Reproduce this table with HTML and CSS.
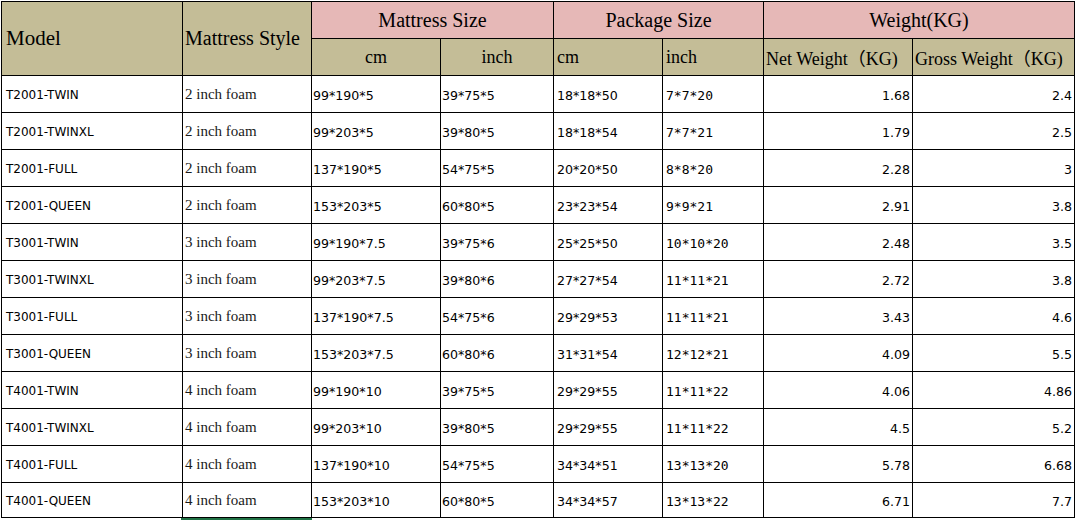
FILE: index.html
```html
<!DOCTYPE html>
<html>
<head>
<meta charset="utf-8">
<link rel="stylesheet" href="styles.css">
</head>
<body>
<div class="sheet">
  <div class="h tan big model">Model</div>
  <div class="h tan big mstyle">Mattress Style</div>
  <div class="h pink big center msize">Mattress Size</div>
  <div class="h pink big center psize">Package Size</div>
  <div class="h pink big center wsize">Weight(KG)</div>
  <div class="h tan sub center">cm</div>
  <div class="h tan sub center">inch</div>
  <div class="h tan sub left">cm</div>
  <div class="h tan sub left">inch</div>
  <div class="h tan sub2">Net Weight（KG)</div>
  <div class="h tan sub2">Gross Weight（KG)</div>

  <div class="c model-c">T2001-TWIN</div><div class="c style-c">2 inch foam</div><div class="c num">99*190*5</div><div class="c num">39*75*5</div><div class="c num pk">18*18*50</div><div class="c pki">7*7*20</div><div class="c w">1.68</div><div class="c w">2.4</div>
  <div class="c model-c">T2001-TWINXL</div><div class="c style-c">2 inch foam</div><div class="c num">99*203*5</div><div class="c num">39*80*5</div><div class="c num pk">18*18*54</div><div class="c pki">7*7*21</div><div class="c w">1.79</div><div class="c w">2.5</div>
  <div class="c model-c">T2001-FULL</div><div class="c style-c">2 inch foam</div><div class="c num">137*190*5</div><div class="c num">54*75*5</div><div class="c num pk">20*20*50</div><div class="c pki">8*8*20</div><div class="c w">2.28</div><div class="c w">3</div>
  <div class="c model-c">T2001-QUEEN</div><div class="c style-c">2 inch foam</div><div class="c num">153*203*5</div><div class="c num">60*80*5</div><div class="c num pk">23*23*54</div><div class="c pki">9*9*21</div><div class="c w">2.91</div><div class="c w">3.8</div>
  <div class="c model-c">T3001-TWIN</div><div class="c style-c">3 inch foam</div><div class="c num">99*190*7.5</div><div class="c num">39*75*6</div><div class="c num pk">25*25*50</div><div class="c pki">10*10*20</div><div class="c w">2.48</div><div class="c w">3.5</div>
  <div class="c model-c">T3001-TWINXL</div><div class="c style-c">3 inch foam</div><div class="c num">99*203*7.5</div><div class="c num">39*80*6</div><div class="c num pk">27*27*54</div><div class="c pki">11*11*21</div><div class="c w">2.72</div><div class="c w">3.8</div>
  <div class="c model-c">T3001-FULL</div><div class="c style-c">3 inch foam</div><div class="c num">137*190*7.5</div><div class="c num">54*75*6</div><div class="c num pk">29*29*53</div><div class="c pki">11*11*21</div><div class="c w">3.43</div><div class="c w">4.6</div>
  <div class="c model-c">T3001-QUEEN</div><div class="c style-c">3 inch foam</div><div class="c num">153*203*7.5</div><div class="c num">60*80*6</div><div class="c num pk">31*31*54</div><div class="c pki">12*12*21</div><div class="c w">4.09</div><div class="c w">5.5</div>
  <div class="c model-c">T4001-TWIN</div><div class="c style-c">4 inch foam</div><div class="c num">99*190*10</div><div class="c num">39*75*5</div><div class="c num pk">29*29*55</div><div class="c pki">11*11*22</div><div class="c w">4.06</div><div class="c w">4.86</div>
  <div class="c model-c">T4001-TWINXL</div><div class="c style-c">4 inch foam</div><div class="c num">99*203*10</div><div class="c num">39*80*5</div><div class="c num pk">29*29*55</div><div class="c pki">11*11*22</div><div class="c w">4.5</div><div class="c w">5.2</div>
  <div class="c model-c">T4001-FULL</div><div class="c style-c">4 inch foam</div><div class="c num">137*190*10</div><div class="c num">54*75*5</div><div class="c num pk">34*34*51</div><div class="c pki">13*13*20</div><div class="c w">5.78</div><div class="c w">6.68</div>
  <div class="c model-c">T4001-QUEEN</div><div class="c style-c">4 inch foam</div><div class="c num">153*203*10</div><div class="c num">60*80*5</div><div class="c num pk">34*34*57</div><div class="c pki">13*13*22</div><div class="c w">6.71</div><div class="c w">7.7</div>
</div>
<div class="below"><div class="sel"></div></div>
</body>
</html>
```

FILE: styles.css
```css
html, body {
  margin: 0;
  padding: 0;
  background: #fff;
  overflow: hidden;
}
body {
  width: 1077px;
  height: 520px;
}
.sheet {
  display: grid;
  grid-template-columns: 180px 128px 128px 112px 108px 100px 148px 161px;
  grid-template-rows: 36px 36px repeat(11, 36px) 34px;
  gap: 1px;
  padding: 1px;
  background: #000;
  width: max-content;
  margin: 1px 0 0 1px;
}
.h, .c {
  display: flex;
  align-items: center;
  white-space: nowrap;
  overflow: hidden;
  color: #000;
}
.h {
  font-family: "Liberation Serif", "Noto Sans CJK SC", serif;
}
.tan { background: #c4bd97; }
.pink { background: #e6b8b7; }
.big { font-size: 20px; }
.model { grid-row: 1 / 3; padding-left: 4px; font-size: 21px; }
.mstyle { grid-row: 1 / 3; padding-left: 2px; }
.msize { grid-column: 3 / 5; }
.psize { grid-column: 5 / 7; }
.wsize { grid-column: 7 / 9; }
.center { justify-content: center; }
.sub { font-size: 18px; }
.sub.left { padding-left: 3px; }
.sub2 { font-size: 18px; padding-left: 2px; }

.c { background: #fff; }
.model-c {
  font-family: "DejaVu Sans", sans-serif;
  font-size: 12px;
  padding-left: 4px;
  padding-top: 2px;
}
.style-c {
  font-family: "Liberation Serif", serif;
  font-size: 15px;
  padding-left: 2px;
  padding-top: 1px;
  color: #1a1a1a;
}
.num {
  font-family: "DejaVu Sans", sans-serif;
  font-size: 12.6px;
  padding-left: 1px;
  padding-top: 2px;
}
.num.pk { padding-left: 3px; }
.pki {
  font-family: "DejaVu Sans Mono", monospace;
  font-size: 13px;
  padding-left: 3px;
  padding-top: 2px;
}
.w {
  font-family: "DejaVu Sans", sans-serif;
  font-size: 12.6px;
  justify-content: flex-end;
  padding-right: 2px;
  padding-top: 2px;
}
.below {
  display: flex;
  height: 2px;
}
.sel {
  margin-left: 181px;
  width: 131px;
  height: 2px;
  background: #217346;
}
```
